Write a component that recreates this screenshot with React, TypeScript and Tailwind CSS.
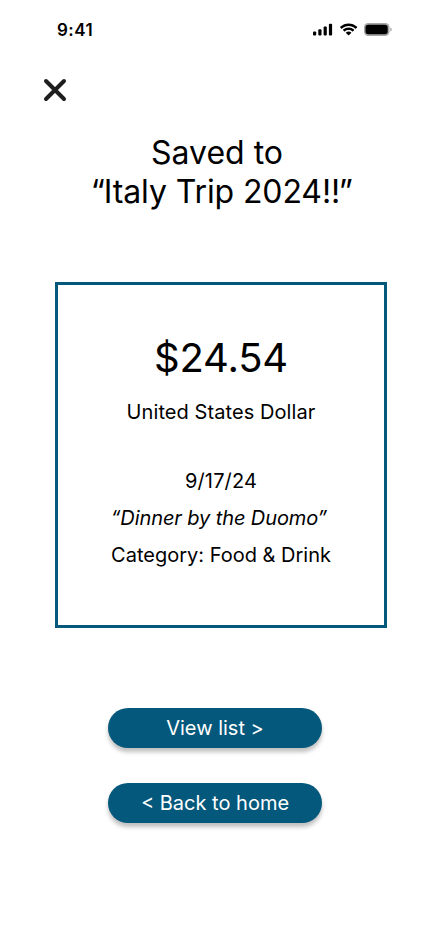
export default function App() {
  return (
    <main className="flex h-[932px] w-[430px] flex-col bg-white font-['Inter',sans-serif] text-black">
      <header className="flex h-[60px] items-center justify-between pr-[38px] pl-[57px]">
        <span className="text-[17px] leading-[22px] font-semibold tracking-[0.5px]">9:41</span>
        <svg width="79" height="14" viewBox="0 0 79 14" fill="black">
          <rect x="0" y="8.5" width="3.2" height="4" rx="1" />
          <rect x="5.3" y="6.2" width="3.2" height="6.3" rx="1" />
          <rect x="10.6" y="3.5" width="3.2" height="9" rx="1" />
          <rect x="15.9" y="0.7" width="3.2" height="11.8" rx="1" />
          <path d="M35.6 3.1c2.5 0 4.9.9 6.7 2.6.1.1.3.1.5 0l1.3-1.3c.1-.2.1-.4 0-.6-4.7-4.5-12.2-4.5-16.9 0-.1.2-.1.4 0 .6l1.3 1.3c.1.1.3.1.5 0 1.8-1.7 4.1-2.6 6.6-2.6z" />
          <path d="M35.6 7.1c1.4 0 2.7.5 3.7 1.4.1.1.4.1.5 0l1.3-1.3c.1-.2.1-.4 0-.6-3.1-2.9-7.9-2.9-11 0-.1.2-.1.4 0 .6l1.3 1.3c.1.1.4.1.5 0 1-.9 2.3-1.4 3.7-1.4z" />
          <path d="M38.2 10c.1-.2.1-.4 0-.5-1.5-1.3-3.7-1.3-5.2 0-.1.1-.1.3 0 .5l2.3 2.3c.1.1.4.1.5 0z" />
          <rect x="51" y="0" width="25.5" height="13" rx="4.2" opacity="0.35" />
          <rect x="52.5" y="1.7" width="22.2" height="9.6" rx="2.8" />
          <path d="M77.4 4.5v4c1.7-.7 1.7-3.3 0-4z" opacity="0.4" />
        </svg>
      </header>
      <button aria-label="Close" className="mt-[18px] ml-[43px] size-6">
        <svg width="24" height="24" viewBox="0 0 24 24" fill="none" stroke="#1e1e1e" strokeWidth="4" strokeLinecap="round">
          <path d="M3 3 21 21M21 3 3 21" />
        </svg>
      </button>
      <h1 className="mt-[31px] pl-1 text-center text-[32px] leading-[39px]">
        Saved to
        <span className="block pl-2">
          <span className="tracking-[-1px]">“</span>
          <span className="tracking-[-0.1px]">Italy Trip 2024!</span>
          <span className="tracking-[-1.5px]">!</span>
          <span className="tracking-[-1.5px]">”</span>
        </span>
      </h1>
      <section className="mt-[71px] ml-[55px] flex h-[346px] w-[332px] flex-col items-center border-3 border-[#04587c] text-xl">
        <p className="mt-[49px] text-[40px] leading-[48px] tracking-[-0.2px]">$24.54</p>
        <p className="mt-[18px] leading-6 tracking-[0.08px]">United States Dollar</p>
        <p className="mt-[45px] leading-6 tracking-[0.15px]">9/17/24</p>
        <p className="mt-[13px] pr-1 leading-6 tracking-[-0.1px] italic">“Dinner by the Duomo”</p>
        <p className="mt-[13px] leading-6">Category: Food &amp; Drink</p>
      </section>
      <div className="mt-20 flex flex-col items-center gap-[35px] text-xl text-white">
        <button className="h-10 w-[214px] rounded-full bg-[#04587c] shadow-[0_4px_4px_rgba(0,0,0,0.25)]">View list &gt;</button>
        <button className="h-10 w-[214px] rounded-full bg-[#04587c] shadow-[0_4px_4px_rgba(0,0,0,0.25)]">&lt; Back to home</button>
      </div>
    </main>
  );
}
